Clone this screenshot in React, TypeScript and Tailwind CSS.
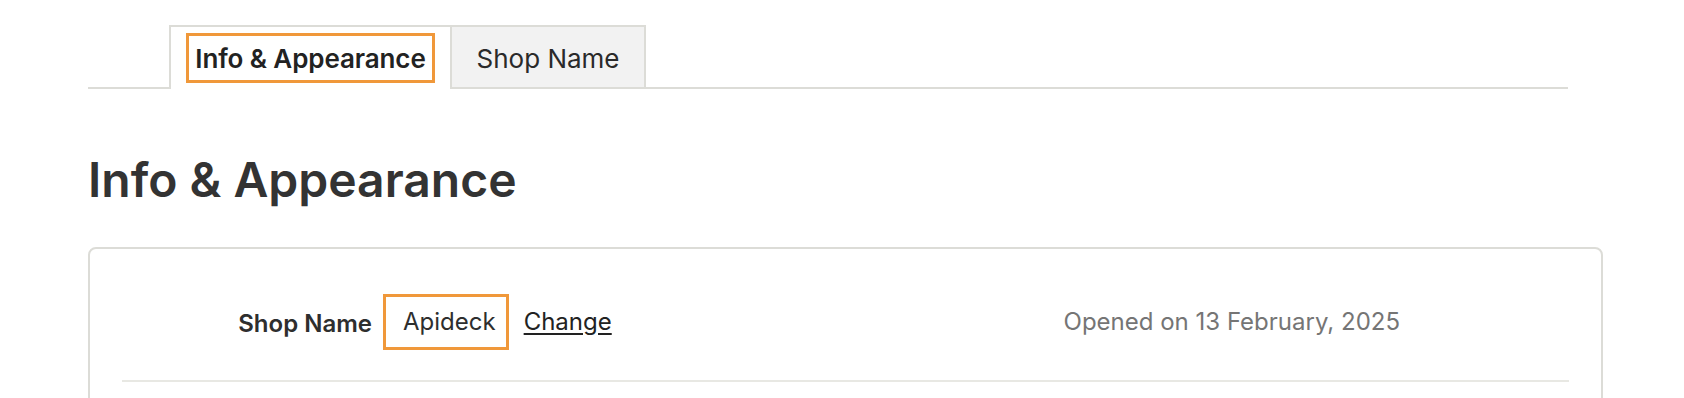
import React from "react";

const App: React.FC = () => {
  return (
    <div className="w-[1684px] h-[398px] overflow-hidden bg-white font-['Inter','Liberation_Sans',sans-serif] text-[#222222]">
      <div className="pl-[88px] pt-[25px]">
        {/* tabs */}
        <div className="flex w-[1480px] border-b-2 border-[#dcdcd7] pl-[81px]">
          <div className="-mb-[2px] w-[283px] border-2 border-b-0 border-[#dcdcd7] bg-white px-[15px] pt-[6px] pb-[6px]">
            <div className="flex h-[50px] items-center justify-center border-[3px] border-[#f0983a] pt-[1px] text-[26px] font-semibold tracking-[-0.1px]">
              Info &amp; Appearance
            </div>
          </div>
          <div className="flex h-[62px] w-[194px] items-center justify-center border-t-2 border-r-2 border-[#dcdcd7] bg-[#f2f2f2] pt-[2px] text-[26px] text-[#2a2a2a]">
            Shop Name
          </div>
        </div>

        <h1 className="mt-[67px] text-[48px] leading-none font-semibold text-[#333333]">
          Info &amp; Appearance
        </h1>

        {/* card */}
        <div className="mt-[43px] h-[220px] w-[1515px] rounded-[8px] border-2 border-[#dcdcd7] px-[32px]">
          <div className="flex items-center pt-[45px] text-[24px]">
            <div className="w-[250px] pt-[3px] text-right font-semibold text-[#2e2e2e]">Shop Name</div>
            <div className="ml-[11px] flex h-[56px] items-center border-[3px] border-[#f0983a] pl-[17px] pr-[10px] text-[#2e2e2e]">
              Apideck
            </div>
            <a href="#" className="ml-[15px] underline underline-offset-[3px]">
              Change
            </a>
            <div className="ml-auto mr-[169px] text-[#757575]">Opened on 13 February, 2025</div>
          </div>
          <div className="mt-[30px] h-[2px] bg-[#e8e8e3]" />
        </div>
      </div>
    </div>
  );
};

export default App;
